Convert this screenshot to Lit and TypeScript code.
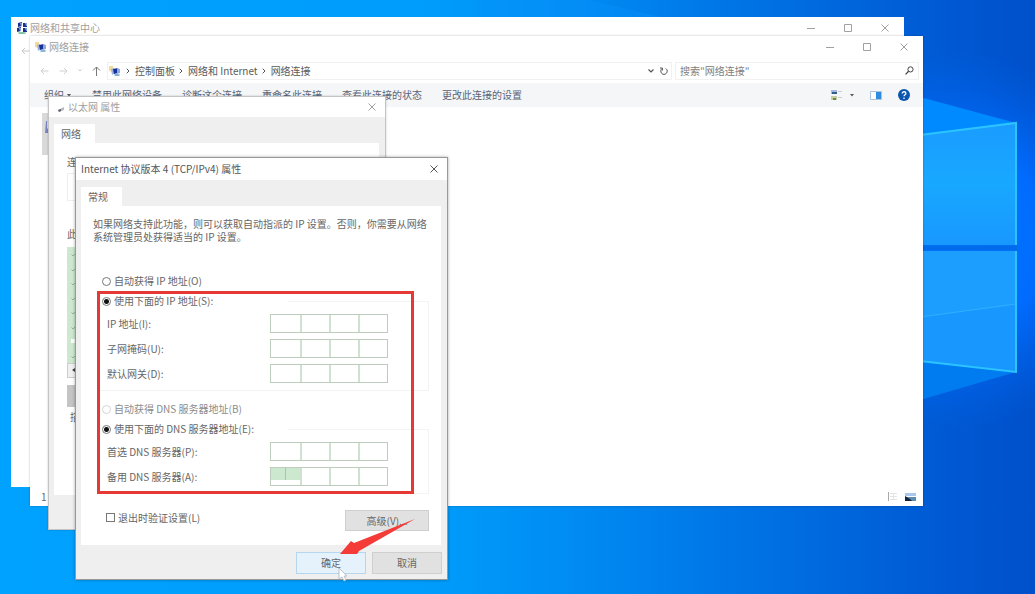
import { LitElement, html, css, svg, nothing } from "lit";
import { customElement, property } from "lit/decorators.js";

const networkIcon = html`<svg class="icon" viewBox="0 0 12 12" width="12" height="12" aria-hidden="true">
  <path d="M0 1h4v6l-4-1z" fill="#f3d99a" />
  <path d="M2 4l3-1 1 5-3 2z" fill="#9db4e0" />
  <path d="M4 4l5-1v5l-4 1z" fill="#16309c" />
  <path d="M8 3l3 1v4l-3 1z" fill="#8fa9dd" />
  <ellipse cx="8" cy="10" rx="3" ry="1" fill="#7db0c8" />
</svg>`;

const sharingIcon = html`<svg class="icon" viewBox="0 0 12 12" width="12" height="12" aria-hidden="true">
  <path d="M2 1l4-1v4l-4 1zM7 1l4 0v4l-4 0z" fill="#1c2f8a" />
  <path d="M1 6l4-1v4l-4 1zM7 6l4 0v4l-4 0z" fill="#1c2f8a" />
  <path d="M4 1h2v3h-1zM9 1h2v3h-1zM3 6h2v3h-1zM9 6h2v3h-1z" fill="#7fa3e0" />
  <ellipse cx="6" cy="11" rx="4" ry="1" fill="#7fc4a4" />
</svg>`;

const closeGlyph = html`<svg viewBox="0 0 8 8" width="8" height="8" aria-hidden="true">
  <path d="M.5.5l7 7M7.5.5l-7 7" stroke="currentColor" fill="none" />
</svg>`;

const crumbArrow = html`<svg class="crumb" viewBox="0 0 4 6" width="4" height="6" aria-hidden="true">
  <path d="M.7.7L3 3 .7 5.3" stroke="#555" fill="none" />
</svg>`;

const shared = css`
  :host {
    display: block;
    box-sizing: border-box;
    font: 10px/16px "Noto Sans CJK SC", "Noto Sans", sans-serif;
    color: #666;
  }
  *,
  *::before {
    box-sizing: border-box;
  }
  button,
  input {
    font: inherit;
    color: inherit;
    margin: 0;
    padding: 0;
    border: 0;
    background: none;
    border-radius: 0;
  }
  svg {
    display: block;
    flex: none;
  }
`;

@customElement("title-bar")
class TitleBar extends LitElement {
  @property() heading = "";
  @property() icon = "";
  @property({ type: Boolean }) sizable = false;

  static styles = [
    shared,
    css`
      .bar {
        display: flex;
        align-items: center;
        gap: 2px;
        height: 100%;
        padding: 0 4px 0 5px;
      }
      .heading {
        flex: 1;
        margin: 0;
        font-size: 10px;
        font-weight: inherit;
        white-space: nowrap;
      }
      .controls {
        display: flex;
      }
      .controls button {
        display: grid;
        place-items: center;
        width: 37px;
        height: 16px;
      }
      .controls.sizable {
        margin-right: -3px;
      }
      .single button {
        width: 18px;
      }
    `,
  ];

  render() {
    const icon =
      this.icon === "network"
        ? networkIcon
        : this.icon === "sharing"
          ? sharingIcon
          : this.icon === "adapter"
            ? html`<svg viewBox="0 0 12 12" width="12" height="12" aria-hidden="true">
                <path d="M4 9l6-3v3l-5 2z" fill="#b7bbc1" />
                <path d="M4 9l3-1v2l-2 1z" fill="#5d6268" />
              </svg>`
            : nothing;
    return html`<header class="bar">
      ${icon}
      <h2 class="heading">${this.heading}</h2>
      <div class="controls ${this.sizable ? "sizable" : "single"}">
        ${this.sizable
          ? html`<button aria-label="最小化">
                <svg viewBox="0 0 8 8" width="8" height="8"><path d="M0 4.5h8" stroke="currentColor" /></svg>
              </button>
              <button aria-label="最大化">
                <svg viewBox="0 0 8 8" width="8" height="8">
                  <path d="M.5.5h7v7h-7z" stroke="currentColor" fill="none" />
                </svg>
              </button>`
          : nothing}
        <button aria-label="关闭">${closeGlyph}</button>
      </div>
    </header>`;
  }
}

@customElement("explorer-window")
class ExplorerWindow extends LitElement {
  static styles = [
    shared,
    css`
      :host {
        display: flex;
        flex-direction: column;
        background: #fff;
      }
      title-bar {
        height: 22px;
        color: #a0a0a0;
      }
      .nav {
        display: flex;
        align-items: center;
        height: 25px;
        padding: 0 4px 0 10px;
      }
      .arrows {
        display: flex;
        align-items: center;
        gap: 10px;
        width: 67px;
      }
      .box {
        display: flex;
        align-items: center;
        height: 18px;
        border: 1px solid #f1f1f1;
      }
      .address {
        flex: 1;
        padding: 0 3px 0 1px;
      }
      .address .icon {
        margin-right: 5px;
      }
      .address a {
        color: #5a5a5a;
        text-decoration: none;
        white-space: nowrap;
      }
      .crumb {
        margin-right: 5px;
      }
      a + .crumb {
        margin-left: 4px;
      }
      .tail {
        display: flex;
        align-items: center;
        gap: 6px;
        margin-left: auto;
      }
      .search {
        width: 244px;
        margin-left: 3px;
        padding: 0 4px;
      }
      .search input {
        flex: 1;
        min-width: 0;
        height: 16px;
      }
      .search input::placeholder {
        color: #808080;
        opacity: 1;
      }
      .commands {
        display: flex;
        align-items: center;
        gap: 20px;
        height: 24px;
        padding: 0 13px 0 14px;
        background: #f5f6f7;
        color: #5a6478;
        white-space: nowrap;
      }
      .organize {
        display: flex;
        align-items: center;
        gap: 3px;
        width: 28px;
      }
      .views {
        display: flex;
        align-items: center;
        gap: 16px;
        margin-left: auto;
      }
      .views button {
        display: flex;
        align-items: center;
        gap: 7px;
      }
      .files {
        flex: 1;
        padding: 6px 12px;
      }
      .item {
        width: 60px;
        height: 42px;
        padding: 8px 2px;
        background: #d9d9d9;
      }
      .status {
        display: flex;
        align-items: center;
        gap: 7px;
        height: 18px;
        padding: 0 7px 0 11px;
      }
      .count {
        flex: 1;
      }
    `,
  ];

  render() {
    return html`
      <title-bar heading="网络连接" icon="network" sizable></title-bar>
      <nav class="nav">
        <div class="arrows">
          <svg viewBox="0 0 9 8" width="9" height="8"><path d="M8.500 4H1M4 1L1 4l3 3" stroke="#d0d0d0" fill="none" /></svg>
          <svg viewBox="0 0 9 8" width="9" height="8"><path d="M.5 4H8M5 1l3 3-3 3" stroke="#d0d0d0" fill="none" /></svg>
          <svg viewBox="0 0 4 3" width="4" height="3"><path d="M.5.5L2 2 3.500.5" stroke="#c8c8c8" fill="none" /></svg>
          <svg viewBox="0 0 9 10" width="9" height="10"><path d="M4.500 10V1M1 4.500L4.500 1 8 4.500" stroke="#777" fill="none" /></svg>
        </div>
        <div class="box address">
          ${networkIcon} ${crumbArrow}<a href="#">控制面板</a>${crumbArrow}<a href="#">网络和 Internet</a
          >${crumbArrow}<a href="#">网络连接</a>
          <div class="tail">
            <svg viewBox="0 0 6 4" width="6" height="4"><path d="M.5.5L3 3 5.500.5" stroke="#555" stroke-width="1.200" fill="none" /></svg>
            <svg viewBox="0 0 8 8" width="8" height="8">
              <path d="M5.800 1.500A3.200 3.200 0 1 1 2.200 1.500M2.400 3.500V1H0" stroke="#555" fill="none" />
            </svg>
          </div>
        </div>
        <div class="box search">
          <input type="search" aria-label="搜索" placeholder='搜索"网络连接"' />
          <svg viewBox="0 0 9 9" width="9" height="9">
            <circle cx="5.500" cy="3.400" r="2.600" stroke="#444" fill="none" />
            <path d="M3.600 5.300L.6 8.400" stroke="#444" stroke-width="1.300" />
          </svg>
        </div>
      </nav>
      <div class="commands">
        <button class="organize">
          组织<svg viewBox="0 0 4 3" width="4" height="3"><path d="M0 0h4L2 2.500z" fill="#555" /></svg>
        </button>
        <button>禁用此网络设备</button>
        <button>诊断这个连接</button>
        <button>重命名此连接</button>
        <button>查看此连接的状态</button>
        <button>更改此连接的设置</button>
        <div class="views">
          <button aria-label="更改视图">
            <svg viewBox="0 0 12 12" width="12" height="12">
              <path d="M0 1h6v4H0z" fill="#a8b8e0" />
              <path d="M1 3h5v2H1z" fill="#2f5f8a" />
              <path d="M0 7h6v4H0z" fill="#c3cfa0" />
              <path d="M2 9h3v2H2z" fill="#6f8550" />
              <path d="M7 2.500h4M7 8.500h4" stroke="#ccc" />
            </svg>
            <svg viewBox="0 0 4 3" width="4" height="3"><path d="M0 0h4L2 2.500z" fill="#555" /></svg>
          </button>
          <button aria-label="预览窗格">
            <svg viewBox="0 0 12 9" width="12" height="9">
              <path d="M.5.5h11v8H.5z" fill="#fff" stroke="#a9c4dc" />
              <path d="M6 1h5v7H6z" fill="#2f8de0" />
            </svg>
          </button>
          <button aria-label="帮助">
            <svg viewBox="0 0 12 12" width="12" height="12">
              <circle cx="6" cy="6" r="6" fill="#0b57b0" />
              <path d="M4.200 4.500c0-2.400 3.700-2.300 3.700-.1C7.900 5.800 6 5.700 6 7.300" stroke="#fff" stroke-width="1.300" fill="none" />
              <circle cx="6" cy="9.200" r=".8" fill="#fff" />
            </svg>
          </button>
        </div>
      </div>
      <main class="files">
        <div class="item">
          <svg viewBox="0 0 8 16" width="8" height="16"><path d="M2 0h1v7l4 5H1z" fill="#7a84c4" /></svg>
        </div>
      </main>
      <footer class="status">
        <span class="count">1</span>
        <svg viewBox="0 0 11 10" width="11" height="10">
          <path d="M1.500 0v9" stroke="#aaa" />
          <path d="M3 1.500h7M3 4.500h7M3 7.500h7M6.500 1v7" stroke="#e4e4e4" />
        </svg>
        <svg viewBox="0 0 11 9" width="11" height="9">
          <path d="M0 0h11v3H0z" fill="#a9c8f0" />
          <path d="M0 4h11v4H0z" fill="#5c8cb0" />
          <path d="M0 3l5 3 2 2H0z" fill="#14233c" />
        </svg>
      </footer>
    `;
  }
}

const sheetStyles = css`
  :host {
    background: #efefef;
    border: 1px solid #c4c4c4;
  }
  .sheet {
    padding: 7px 6px 0 5px;
  }
  .tab {
    display: block;
    width: 41px;
    height: 19px;
    padding-left: 7px;
    background: #fff;
    text-align: left;
  }
  .page {
    background: #fff;
  }
`;

@customElement("adapter-dialog")
class AdapterDialog extends LitElement {
  static styles = [
    shared,
    sheetStyles,
    css`
      title-bar {
        height: 20px;
        background: #fff;
        color: #a0a0a0;
      }
      .page {
        display: flex;
        flex-direction: column;
        padding: 11px 12px 20px 13px;
        height: 352px;
      }
      .device {
        height: 28px;
        margin: 3px 0 25px;
        border: 1px solid #eee;
      }
      .list {
        list-style: none;
        margin: 5px 0 0;
        padding: 0;
        background: #cce8cf;
      }
      .list li {
        display: flex;
        align-items: center;
        height: 15px;
        padding-left: 4px;
      }
      .list li:nth-child(even) {
        height: 14px;
      }
      .scroll {
        height: 15px;
        padding: 4px;
        background: #f0f0f0;
        border: 1px solid #ccc;
      }
      .install {
        width: 90px;
        height: 22px;
        margin: 7px 0 2px;
        background: #c4c4c4;
      }
      .details {
        padding-left: 3px;
      }
    `,
  ];

  render() {
    return html`
      <title-bar heading="以太网 属性" icon="adapter"></title-bar>
      <div class="sheet">
        <button class="tab">网络</button>
        <div class="page">
          <span>连</span>
          <div class="device"></div>
          <span>此</span>
          <ul class="list">
            ${Array.from(
              { length: 8 },
              (_, i) => html`<li>
                <svg viewBox="0 0 6 5" width="6" height="5">
                  ${i === 6
                    ? svg`<rect x="0" y="0" width="4" height="4" fill="#fff" />`
                    : svg`<path d="M.5 2.500L2 4 5.500.5" stroke="#98b09b" fill="none" />`}
                </svg>
              </li>`,
            )}
          </ul>
          <div class="scroll">
            <svg viewBox="0 0 3 4" width="3" height="4"><path d="M3 0v4L0 2z" fill="#444" /></svg>
          </div>
          <button class="install" aria-label="安装"></button>
          <span class="details">描</span>
        </div>
      </div>
    `;
  }
}

@customElement("address-field")
class AddressField extends LitElement {
  @property() label = "";
  @property({ type: Boolean }) selected = false;

  static styles = [
    shared,
    css`
      .row {
        display: grid;
        grid-template-columns: 163px 118px;
        align-items: center;
        white-space: nowrap;
      }
      .octets {
        display: grid;
        grid-template-columns: repeat(4, 1fr);
        height: 19px;
        border: 1px solid #bccdbe;
      }
      .octets input {
        min-width: 0;
        width: 100%;
        height: 17px;
        text-align: center;
      }
      .octets input + input {
        border-left: 2px solid #cfe2d1;
      }
      .selected input:first-of-type {
        background:
          linear-gradient(#a9c3ac, #a9c3ac) 14px 0 / 1px 12px no-repeat,
          linear-gradient(#cce8cf, #cce8cf) 0 0 / 100% 12px no-repeat;
      }
    `,
  ];

  render() {
    return html`<div class="row">
      <label for="octet-1">${this.label}</label>
      <div class="octets ${this.selected ? "selected" : ""}">
        ${[1, 2, 3, 4].map(
          (n) => html`<input id="octet-${n}" inputmode="numeric" maxlength="3" aria-label="${this.label} ${n}" />`,
        )}
      </div>
    </div>`;
  }
}

@customElement("ipv4-dialog")
class Ipv4Dialog extends LitElement {
  static styles = [
    shared,
    sheetStyles,
    css`
      :host {
        border-color: #999;
      }
      title-bar {
        height: 22px;
        background: #fff;
        color: #555;
      }
      .page {
        padding: 11px 12px 14px;
      }
      .intro {
        margin: 0 0 30px;
        line-height: 13px;
        white-space: nowrap;
      }
      .options {
        padding: 0 0 0 5px;
      }
      .choice {
        display: flex;
        align-items: center;
        gap: 3px;
        height: 16px;
        padding-left: 4px;
        white-space: nowrap;
      }
      .choice input {
        appearance: none;
        width: 9px;
        height: 9px;
        border: 1px solid #777;
        background: #fff;
      }
      .choice input[type="radio"] {
        border-radius: 50%;
      }
      .choice input[type="radio"]:checked {
        background: radial-gradient(circle, #111 2px, #fff 3px);
      }
      .dim {
        color: #8c8c8c;
      }
      .dim input {
        border-color: #d4d4d4;
      }
      .group {
        display: grid;
        gap: 6px;
        min-width: 0;
        margin: 4px 0 10px;
        padding: 5px 8px 7px;
        border: 1px solid #f3f3f3;
      }
      .group legend {
        width: 190px;
        margin-left: -9px;
        padding: 0;
      }
      .group.last {
        margin-bottom: 16px;
      }
      .extra {
        display: flex;
        justify-content: space-between;
        align-items: center;
      }
      .extra .choice {
        padding: 0 0 6px 8px;
      }
      .push {
        width: 84px;
        height: 21px;
        border: 1px solid #cfcfcf;
        background: #e1e1e1;
      }
      .footer {
        display: flex;
        justify-content: flex-end;
        gap: 6px;
        padding: 7px 5px 5px;
      }
      .footer .push {
        width: 70px;
        height: 22px;
      }
      .footer .primary {
        border-color: #b4d6f0;
        background: #e5f1fb;
      }
      .highlight {
        position: absolute;
        inset: 133px 33px 85px 21px;
        border: 3px solid #e53935;
        pointer-events: none;
      }
      .pointer {
        position: absolute;
        right: 31px;
        bottom: -4px;
        pointer-events: none;
      }
    `,
  ];

  render() {
    return html`
      <title-bar heading="Internet 协议版本 4 (TCP/IPv4) 属性"></title-bar>
      <div class="sheet">
        <button class="tab">常规</button>
        <div class="page">
          <p class="intro">
            如果网络支持此功能，则可以获取自动指派的 IP 设置。否则，你需要从网络<br />系统管理员处获得适当的 IP 设置。
          </p>
          <div class="options">
            <label class="choice"><input type="radio" name="ip" />自动获得 IP 地址(O)</label>
            <fieldset class="group">
              <legend>
                <label class="choice"><input type="radio" name="ip" checked />使用下面的 IP 地址(S):</label>
              </legend>
              <address-field label="IP 地址(I):"></address-field>
              <address-field label="子网掩码(U):"></address-field>
              <address-field label="默认网关(D):"></address-field>
            </fieldset>
            <label class="choice dim"><input type="radio" name="dns" disabled />自动获得 DNS 服务器地址(B)</label>
            <fieldset class="group last">
              <legend>
                <label class="choice"><input type="radio" name="dns" checked />使用下面的 DNS 服务器地址(E):</label>
              </legend>
              <address-field label="首选 DNS 服务器(P):"></address-field>
              <address-field label="备用 DNS 服务器(A):" selected></address-field>
            </fieldset>
            <div class="extra">
              <label class="choice"><input type="checkbox" />退出时验证设置(L)</label>
              <button class="push">高级(V)...</button>
            </div>
          </div>
        </div>
      </div>
      <div class="footer">
        <button class="push primary">确定</button>
        <button class="push">取消</button>
      </div>
      <div class="highlight"></div>
      <svg class="pointer" viewBox="0 0 78 66" width="78" height="66" aria-hidden="true">
        <path d="M2 37L13 24l3 2L77 2 21 34l-2 3z" fill="#f43b38" />
        <path d="M1 51v11l3-2 2 4 2-1-2-4h3z" fill="#fff" stroke="#aab4bf" stroke-width=".8" />
      </svg>
    `;
  }
}

@customElement("app-root")
class AppRoot extends LitElement {
  static styles = [
    shared,
    css`
      :host {
        position: relative;
        height: 100vh;
        overflow: hidden;
        background: #00a2ff;
      }
      .wallpaper {
        width: 100%;
        height: 100%;
      }
      .window {
        position: absolute;
      }
      .sharing {
        inset: 17px 131px 107px 11px;
        background: #fff;
      }
      .sharing title-bar {
        height: 22px;
        color: #a0a0a0;
      }
      .back {
        padding: 8px 10px;
      }
      .explorer {
        inset: 36px 112px 88px 30px;
        box-shadow: 0 0 2px #0004;
      }
      .adapter {
        left: 48px;
        top: 96px;
        width: 338px;
        height: 434px;
        box-shadow: 0 0 2px #0003;
      }
      .ipv4 {
        left: 75px;
        top: 157px;
        width: 373px;
        box-shadow: 0 0 3px #0005;
      }
    `,
  ];

  render() {
    return html`
      <svg class="wallpaper" viewBox="0 0 1035 594" preserveAspectRatio="none" aria-hidden="true">
        <defs>
          <linearGradient id="sky" x1="0" y1="0" x2="1" y2="0">
            <stop offset="0" stop-color="#00a2ff" />
            <stop offset=".42" stop-color="#009cfb" />
            <stop offset=".55" stop-color="#008cf3" />
            <stop offset=".7" stop-color="#0076e6" />
            <stop offset=".88" stop-color="#005dd6" />
            <stop offset="1" stop-color="#0050ca" />
          </linearGradient>
          <radialGradient id="glow" gradientUnits="userSpaceOnUse" cx="950" cy="240" r="190">
            <stop offset="0" stop-color="#0078ff" />
            <stop offset=".5" stop-color="#006cff" />
            <stop offset="1" stop-color="#0062e8" stop-opacity="0" />
          </radialGradient>
          <linearGradient id="pane" x1="0" y1="0" x2="0" y2="1">
            <stop offset="0" stop-color="#1a9cff" />
            <stop offset=".5" stop-color="#18a8ff" />
            <stop offset="1" stop-color="#1898ff" />
          </linearGradient>
        </defs>
        <rect width="1035" height="594" fill="url(#sky)" />
        <rect width="1035" height="594" fill="url(#glow)" />
        <path d="M590 0l75 18H480V0z" fill="#0a92fb" opacity=".35" />
        <path d="M920 97l96 26-96 12z" fill="#008aff" />
        <path d="M920 361l96 11-96 28z" fill="#007cf0" />
        <path d="M920 135l96-12v122h-96z" fill="url(#pane)" />
        <path d="M920 251h96v121l-96-11z" fill="#1898ff" />
        <path d="M920 251h96v53l-96 13z" fill="#1c9eff" />
        <path d="M920 317l96-13" stroke="#30b0ff" />
        <path d="M920 135l96-12v122M1016 251v121l-96-11" stroke="#2cc4ff" stroke-width="2" fill="none" />
        <path d="M920 248h97" stroke="#006cec" stroke-width="5" />
      </svg>
      <section class="window sharing">
        <title-bar heading="网络和共享中心" icon="sharing" sizable></title-bar>
        <svg class="back" viewBox="0 0 9 8" width="29" height="24"><path d="M8.500 4H1M4 1L1 4l3 3" stroke="#c8c8c8" fill="none" /></svg>
      </section>
      <explorer-window class="window explorer"></explorer-window>
      <adapter-dialog class="window adapter"></adapter-dialog>
      <ipv4-dialog class="window ipv4"></ipv4-dialog>
    `;
  }
}
